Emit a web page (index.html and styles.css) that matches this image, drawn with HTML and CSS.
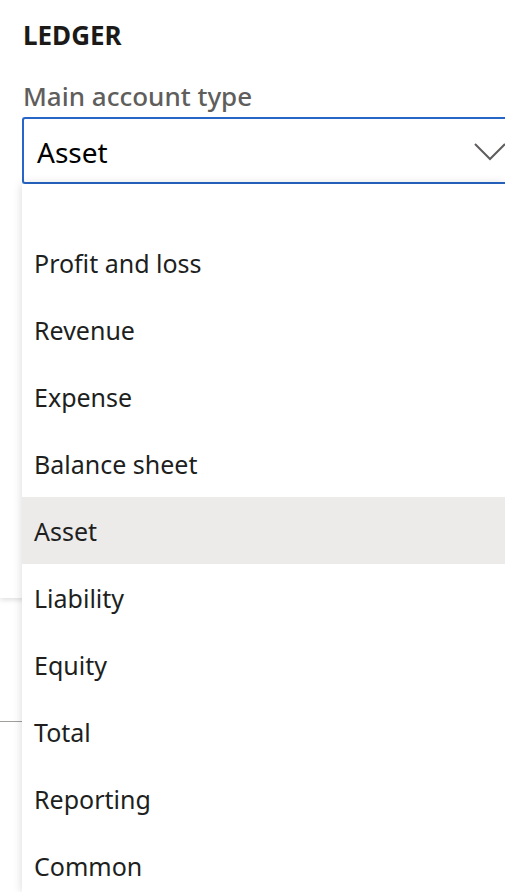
FILE: index.html
```html
<!DOCTYPE html>
<html>
<head>
<meta charset="utf-8">
<link rel="stylesheet" href="styles.css">
</head>
<body>
<div class="page">
  <section class="card">
    <h2 class="title">LEDGER</h2>
    <label class="label">Main account type</label>
    <div class="select">
      <span class="value">Asset</span>
      <svg class="chev" width="32" height="18" viewBox="0 0 32 18"><path d="M1 1 L16 16 L31 1" fill="none" stroke="#605e5c" stroke-width="2"/></svg>
    </div>
  </section>
  <div class="rowline"></div>

  <ul class="dropdown">
    <li class="opt empty"></li>
    <li class="opt">Profit and loss</li>
    <li class="opt">Revenue</li>
    <li class="opt">Expense</li>
    <li class="opt">Balance sheet</li>
    <li class="opt selected">Asset</li>
    <li class="opt">Liability</li>
    <li class="opt">Equity</li>
    <li class="opt">Total</li>
    <li class="opt">Reporting</li>
    <li class="opt">Common</li>
  </ul>
</div>
</body>
</html>
```

FILE: styles.css
```css
html, body {
  margin: 0;
  padding: 0;
  background: #ffffff;
  overflow: hidden;
}
body {
  width: 505px;
  height: 892px;
  font-family: "Noto Sans", "Open Sans", sans-serif;
  color: #201f1e;
}
.page {
  position: relative;
  height: 892px;
  overflow: hidden;
}
.card {
  height: 598px;
  box-sizing: border-box;
  padding: 17px 0 0 23px;
  background: #fff;
  box-shadow: 0 2px 5px rgba(0,0,0,0.13);
  display: flex;
  flex-direction: column;
}
.title {
  margin: 0;
  font-size: 26px;
  font-weight: 700;
  line-height: 36px;
  color: #1b1a19;
}
.label {
  margin-top: 25px;
  font-size: 26px;
  line-height: 36px;
  color: #605e5c;
  font-weight: 500;
}
.select {
  margin-top: 3px;
  margin-left: -1px;
  width: 483px;
  height: 67px;
  box-sizing: border-box;
  border: 2px solid #2766c6;
  border-right: none;
  border-radius: 3px 0 0 3px;
  display: flex;
  align-items: center;
  padding-left: 13px;
}
.value {
  font-size: 28px;
  color: #000;
  flex: 1;
  line-height: 36px;
  margin-top: 2px;
}
.chev {
  margin-right: -1px;
  margin-top: 2px;
}
.rowline {
  margin-top: 123px;
  height: 1px;
  background: #a19f9d;
  width: 100%;
}
.dropdown {
  position: absolute;
  top: 184px;
  left: 22px;
  width: 483px;
  height: 708px;
  margin: 0;
  padding: 0;
  list-style: none;
  background: #fff;
  box-shadow: 0 0 9px rgba(0,0,0,0.16);
  overflow: hidden;
}
.opt {
  height: 67px;
  display: flex;
  align-items: center;
  padding-left: 12px;
  font-size: 25px;
  color: #201f1e;
}
.opt.empty {
  height: 45px;
}
.opt.selected {
  background: #edebe9;
}
```
